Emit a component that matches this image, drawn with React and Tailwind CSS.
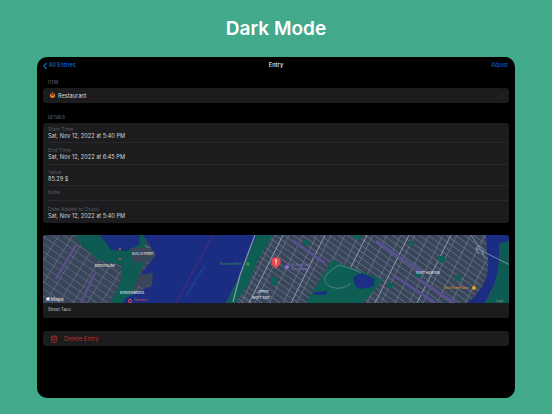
import React from 'react';
import { ChevronLeft, ChevronRight, Trash2 } from 'lucide-react';

const range = (from, to, step) => {
  const out = [];
  for (let v = from; v <= to; v += step) out.push(v);
  return out;
};

// street grid of the map, drawn as two families of slanted lines
const MapPicture = () => (
  <svg viewBox="0 0 466 68" className="block w-full h-[68px]" fontFamily="Inter, sans-serif">
    <rect width="466" height="68" fill="#39465a" />

    {/* NJ side */}
    <g stroke="#6f7c92" strokeWidth="0.6">
      {range(-90, 110, 11).map((x) => (
        <line key={x} x1={x} y1="0" x2={x + 100} y2="68" />
      ))}
      {range(-40, 130, 14).map((x) => (
        <line key={x} x1={x + 42} y1="0" x2={x} y2="68" />
      ))}
    </g>
    <path d="M33 10 L13 44" stroke="#57508c" strokeWidth="2.5" fill="none" />
    <path d="M52 38 L38 68" stroke="#57508c" strokeWidth="2.5" fill="none" />

    {/* Manhattan side */}
    <g stroke="#7a879c" strokeWidth="0.6">
      {range(190, 620, 14).map((x) => (
        <line key={x} x1={x} y1="0" x2={x - 34} y2="68" />
      ))}
      {range(70, 470, 9).map((x) => (
        <line key={x} x1={x} y1="0" x2={x + 95} y2="68" />
      ))}
    </g>
    <g stroke="#98a5b8" strokeWidth="0.9">
      {[240, 282, 324, 366, 408].map((x) => (
        <line key={x} x1={x} y1="0" x2={x - 34} y2="68" />
      ))}
    </g>
    <g stroke="#574f8e" strokeWidth="3">
      <line x1="250" y1="6" x2="282" y2="28" />
      <line x1="333" y1="6" x2="380" y2="38" />
      <line x1="350" y1="40" x2="392" y2="68" />
      <line x1="375" y1="44" x2="412" y2="68" />
    </g>

    {/* parks */}
    <path d="M33 0 L36 8 L55 25 L78 30 L78 45 L68 68 L84 68 L100 30 L103 0 Z" fill="#0d5b52" />
    <path d="M57 0 L97 0 L96 10 L84 16 L68 15 Z" fill="#1a2f80" />
    <circle cx="77" cy="14" r="1.3" fill="#8a5a3c" />
    <circle cx="77" cy="24" r="1.3" fill="#8a5a3c" />
    <path d="M87 13 L113 13 L111 27 L90 27 Z" fill="#39465a" />
    <path d="M289 25 L340 45 L320 68 L263 68 Z" fill="#0d5f54" />
    <path d="M310 42 L318 38 L332 44 L330 52 L316 54 L312 50 Z" fill="#1c2f85" />
    <path d="M270 57 L284 56 L283 60 L272 60 Z" fill="#1c2f85" />
    <path d="M296 30 Q272 44 288 52 Q300 56 308 48 M296 30 Q312 34 318 38" stroke="#7d8b95" strokeWidth="0.7" fill="none" />
    <g fill="#0e5f54">
      <rect x="228" y="42" width="7" height="8" />
      <rect x="260" y="5" width="6" height="5" />
      <rect x="310" y="0" width="8" height="4" />
      <rect x="395" y="21" width="7" height="6" />
      <rect x="412" y="40" width="6" height="6" />
      <rect x="366" y="6" width="5" height="5" />
      <rect x="344" y="48" width="6" height="5" />
      <rect x="372" y="38" width="6" height="4" />
    </g>

    {/* rivers */}
    <path d="M100 0 L214 0 L197 40 L183 68 L80 68 L83 63 L110 50 L97 40 L113 20 Z" fill="#1a2d82" />
    <path d="M95 40 L110 38 L109 49 L92 52 Z" fill="#39465a" />
    <path d="M170 0 L133 68" stroke="#5a2a72" strokeWidth="1" />
    <path d="M214 0 L230 0 L215 25 L205 50 L192 68 L183 68 L197 40 Z" fill="#0d5f54" />
    <path d="M212 0 L197 40 L190 67" stroke="#8797ae" strokeWidth="1.2" fill="none" />
    <path d="M443 0 L466 0 L466 6 L456 9 L456 30 Q458 42 448 55 L442 68 L424 68 Q436 60 443 44 Q447 30 444 18 Z" fill="#1a2d82" />
    <path d="M456 9 L466 6 L466 68 L442 68 Q458 44 456 9 Z" fill="#0d5b52" />
    <path d="M428 0 Q438 14 442 24 M433 13 L467 30 M436 19 Q430 12 436 11 Q442 14 440 20" stroke="#8393aa" strokeWidth="0.9" fill="none" />

    {/* labels */}
    <g fill="#cfd4dc" fontSize="3.3" fontWeight="600" textAnchor="middle">
      <text x="100" y="19.5">BULLS FERRY</text>
      <text x="62" y="31.5">BERGENLINE</text>
      <text x="89" y="58.5">BERGENWOOD</text>
      <text x="220" y="58">UPPER</text>
      <text x="218" y="63.5">WEST SIDE</text>
      <text x="385" y="38.5">EAST HARLEM</text>
    </g>
    <text x="177" y="30" fill="#3d9a4a" fontSize="3.2">Riverside Park</text>
    <circle cx="205" cy="29" r="1.8" fill="#2f9a47" />
    <text x="143" y="63" fill="#2f62c0" fontSize="3" transform="rotate(-58 143 63)">Hudson River (North River)</text>
    <circle cx="87" cy="66" r="1.6" fill="none" stroke="#e04a4a" strokeWidth="1" />
    <text x="91" y="65.5" fill="#d84a4a" fontSize="3">Palisades</text>
    <circle cx="244" cy="32" r="2" fill="#8c6fe0" />
    <text x="248" y="31" fill="#8a74d8" fontSize="3">Mt New York</text>
    <text x="248" y="35" fill="#8a74d8" fontSize="3">City Hospital</text>
    <text x="401" y="54" fill="#e59a1c" fontSize="3.2">East River Plaza</text>
    <circle cx="431" cy="53" r="2" fill="#e59a1c" />
    <text x="453" y="66.5" fill="#8b94a0" fontSize="2.8">Legal</text>

    {/* Apple Maps mark */}
    <rect x="3.5" y="62.5" width="3" height="3" fill="#f2f2f2" />
    <text x="7.5" y="66" fill="#e8e8e8" fontSize="5">Maps</text>

    {/* pin */}
    <path d="M228.2 26.8 a4.8 4.8 0 1 1 9.6 0 c0 3 -3 4.5 -4.8 7.2 c-1.8 -2.7 -4.8 -4.2 -4.8 -7.2 Z" fill="#e8474c" />
    <rect x="232.4" y="24" width="1.2" height="3.6" fill="#fff" />
    <rect x="232.4" y="28.4" width="1.2" height="1.2" fill="#fff" />
  </svg>
);

// small stew pot in front of "Restaurant"
const PotIcon = () => (
  <svg viewBox="0 0 7 7" className="w-[7px] h-[7px] shrink-0">
    <rect x="2.6" y="0.4" width="1.8" height="1.2" rx="0.5" fill="#d9a066" />
    <path d="M1 2.2 h5 v1 a2.5 2.6 0 0 1 -5 0 Z" fill="#e8912e" />
    <ellipse cx="3.5" cy="3.2" rx="1.5" ry="1.1" fill="#d8321f" />
    <rect x="0.6" y="1.6" width="5.8" height="0.8" rx="0.3" fill="#8a4a2a" />
  </svg>
);

const DetailRow = ({ label, value, height, last }) => (
  <div className={`pl-[5px] flex flex-col ${height}`}>
    <div className={`flex-1 flex flex-col justify-center ${value ? 'pt-[1px]' : 'pb-[2px]'} ${last ? '' : 'border-b border-[#28282a]'}`}>
      <div className="text-[5.2px] leading-[7px] text-[#5a5a5e]">{label}</div>
      {value && <div className="text-[5.6px] leading-[7px] text-[#d4d4d6]">{value}</div>}
    </div>
  </div>
);

const SectionLabel = ({ children }) => (
  <div className="px-[5px] text-[4.2px] leading-[6px] text-[#77777c] uppercase">{children}</div>
);

export default function App() {
  return (
    <div className="w-[552px] h-[414px] bg-[#43a98b] overflow-hidden flex flex-col items-center font-['Inter',sans-serif]">
      <h1 className="h-[57px] pt-[14px] text-[19px] leading-[30px] font-semibold text-white">Dark Mode</h1>

      <div className="w-[478px] h-[341px] bg-black rounded-[10px] px-[6px] flex flex-col">
        {/* Nav bar */}
        <div className="h-[17px] grid grid-cols-3 items-center text-[5.6px] font-medium">
          <div className="flex items-center text-[#0a6bd6]">
            <ChevronLeft size={10} strokeWidth={2.6} className="-ml-[3px] -mr-[1px]" />
            <span>All Entries</span>
          </div>
          <div className="text-center text-[#dcdcde] font-semibold">Entry</div>
          <span className="pr-[1px] text-right text-[#0a5fbd]">Adjust</span>
        </div>

        <div className="mt-[6px]">
          <SectionLabel>Item</SectionLabel>
        </div>
        <div className="mt-[2px] h-[15px] bg-[#1c1c1e] rounded-[3px] pl-[6px] pr-[4px] flex items-center justify-between">
          <div className="flex items-center gap-[2px] pt-[1px] text-[5.6px] text-[#d4d4d6]">
            <PotIcon />
            <span>Restaurant</span>
          </div>
          <ChevronRight size={6} className="text-[#48484a]" />
        </div>

        <div className="mt-[12px]">
          <SectionLabel>Details</SectionLabel>
        </div>
        <div className="mt-[2px] h-[100px] bg-[#1c1c1e] rounded-[3px] flex flex-col">
          <DetailRow label="Start Time" value="Sat, Nov 12, 2022 at 5:40 PM" height="h-[20px]" />
          <DetailRow label="End Time" value="Sat, Nov 12, 2022 at 6:45 PM" height="h-[22px]" />
          <DetailRow label="Value" value="85.29 $" height="h-[21px]" />
          <DetailRow label="Note" height="h-[15px]" />
          <DetailRow label="Date Added to Druck" value="Sat, Nov 12, 2022 at 5:40 PM" height="h-[22px]" last />
        </div>

        {/* Map card */}
        <div className="mt-[12px] rounded-[3px] overflow-hidden bg-[#1c1c1e]">
          <MapPicture />
          <div className="h-[15px] pl-[5px] flex items-center text-[4.2px] text-[#c8c8ca]">Street Taco</div>
        </div>

        <div className="mt-[13px] h-[15px] bg-[#1c1c1e] rounded-[3px] pl-[7px] flex items-center gap-[6px] text-[6px] text-[#b8302b]">
          <Trash2 size={8} strokeWidth={2.2} />
          <span>Delete Entry</span>
        </div>
      </div>
    </div>
  );
}
